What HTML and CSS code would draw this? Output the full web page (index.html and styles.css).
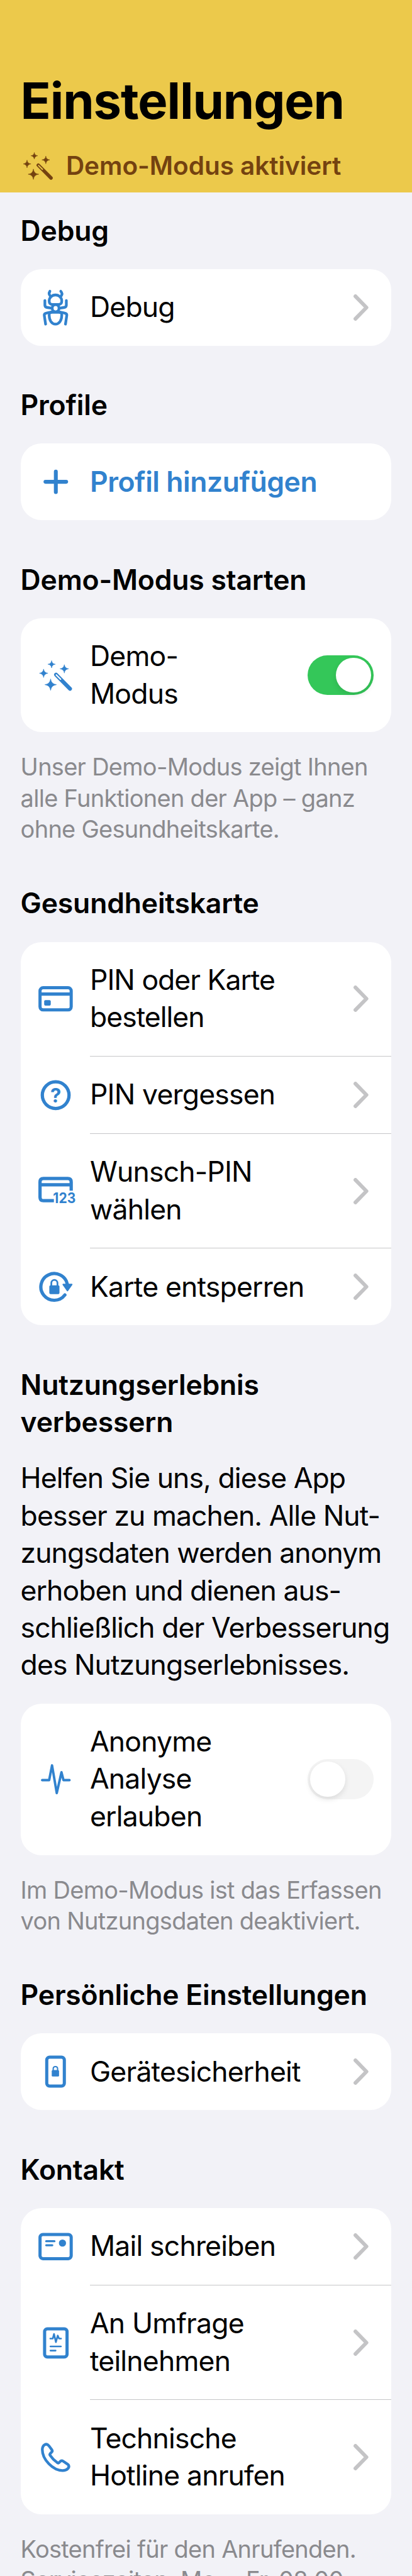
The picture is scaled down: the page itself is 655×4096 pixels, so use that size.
FILE: index.html
```html
<!DOCTYPE html>
<html lang="de">
<head>
<meta charset="utf-8">
<title>Einstellungen</title>
<link rel="stylesheet" href="styles.css">
</head>
<body>
<svg class="defs" width="0" height="0" aria-hidden="true">
  <symbol id="wand" viewBox="0 -9 300 300">
    <g fill="currentColor" stroke="currentColor" stroke-width="3" stroke-linejoin="round">
      <path d="M119 37Q122 60 145 62Q122 65 119 88Q116 65 93 62Q116 60 119 37Z"/>
      <path d="M208 65Q211 91 238 94Q211 97 208 124Q205 97 178 94Q205 91 208 65Z"/>
      <path d="M63 96Q66 122 93 125Q66 129 63 155Q60 129 34 125Q60 122 63 96Z"/>
      <path d="M112 165Q116 201 153 205Q116 209 112 245Q108 209 72 205Q108 201 112 165Z"/>
    </g>
    <path d="M150 135L248 234" fill="none" stroke="currentColor" stroke-width="27" stroke-linecap="round"/>
    <path d="M152 137L182 167" fill="none" class="wand-gap" stroke-width="9" stroke-linecap="round"/>
  </symbol>
  <symbol id="chevron" viewBox="0 0 24 42">
    <path d="M3.1 3.1L20.6 21L3.1 38.9" fill="none" stroke="currentColor" stroke-width="6" stroke-linecap="round" stroke-linejoin="round"/>
  </symbol>
</svg>

<header class="header">
  <h1 class="title">Einstellungen</h1>
  <div class="banner">
    <svg class="banner-icon"><use href="#wand"/></svg>
    <span>Demo-Modus aktiviert</span>
  </div>
</header>

<main class="content">
  <section class="section">
    <h2 class="heading">Debug</h2>
    <div class="card">
      <div class="row">
        <svg class="icon" viewBox="0 3.5 300 300" fill="none" stroke="currentColor" stroke-width="19" stroke-linecap="round" stroke-linejoin="round">
          <path d="M107 39Q96 56 108 70M183 39Q198 56 187 70"/>
          <path d="M102 107C102 84 122 65 146 65S190 84 190 107C190 124 184 132 166 132H126C108 132 102 124 102 107Z"/>
          <ellipse cx="147" cy="158" rx="24" ry="25"/>
          <path d="M122 186C108 187 102 190 102 207C102 244 121 269 146 269S190 244 190 207C190 190 184 187 171 186Z"/>
          <path d="M72 104V137Q72 150 85 152L122 158M222 104V137Q222 150 209 152L172 158"/>
          <path d="M77 269L68 209Q66 195 82 192L123 183M216 269L225 209Q227 195 211 192L170 183"/>
        </svg>
        <span class="label">Debug</span>
        <svg class="chevron"><use href="#chevron"/></svg>
      </div>
    </div>
  </section>

  <section class="section">
    <h2 class="heading">Profile</h2>
    <div class="card">
      <div class="row">
        <svg class="icon" viewBox="0 0 300 300" fill="none" stroke="currentColor" stroke-width="27" stroke-linecap="round">
          <path d="M76 150H221M148.500 78V222"/>
        </svg>
        <span class="label link">Profil hinzufügen</span>
      </div>
    </div>
  </section>

  <section class="section">
    <h2 class="heading">Demo-Modus starten</h2>
    <div class="card">
      <div class="row">
        <svg class="icon"><use href="#wand"/></svg>
        <span class="label">Demo-<br>Modus</span>
        <span class="toggle on"><span class="knob"></span></span>
      </div>
    </div>
    <p class="footnote">Unser Demo-Modus zeigt Ihnen<br>alle Funktionen der App – ganz<br>ohne Gesundheitskarte.</p>
  </section>

  <section class="section after-note">
    <h2 class="heading">Gesundheitskarte</h2>
    <div class="card">
      <div class="row">
        <svg class="icon" viewBox="0 0 300 300">
          <rect x="38" y="73" width="218" height="155" rx="22" fill="none" stroke="currentColor" stroke-width="22"/>
          <path d="M38 117H256" stroke="currentColor" stroke-width="23"/>
          <rect x="67" y="159" width="46" height="39" rx="9" fill="currentColor"/>
        </svg>
        <span class="label tight">PIN oder Karte<br>bestellen</span>
        <svg class="chevron"><use href="#chevron"/></svg>
      </div>
      <div class="row">
        <svg class="icon" viewBox="0 0 300 300">
          <circle cx="147.500" cy="151" r="93.500" fill="none" stroke="currentColor" stroke-width="23"/>
          <text x="148" y="202" class="glyph" font-size="136" text-anchor="middle">?</text>
        </svg>
        <span class="label">PIN vergessen</span>
        <svg class="chevron"><use href="#chevron"/></svg>
      </div>
      <div class="row">
        <svg class="icon" viewBox="0 10 300 300">
          <path d="M135 226H62Q38 226 38 202V95Q38 71 62 71H232Q256 71 256 95V156M38 115H256" fill="none" stroke="currentColor" stroke-width="23"/>
          <text x="129" y="244" class="glyph" font-size="99" textLength="158" lengthAdjust="spacingAndGlyphs">123</text>
        </svg>
        <span class="label">Wunsch-PIN<br>wählen</span>
        <svg class="chevron"><use href="#chevron"/></svg>
      </div>
      <div class="row">
        <svg class="icon" viewBox="0 3 300 300">
          <path d="M212 210A93.500 93.500 0 1 1 229 135" fill="none" stroke="currentColor" stroke-width="23" stroke-linecap="round"/>
          <path d="M200 137H260L230 179Z" fill="currentColor" stroke="currentColor" stroke-width="10" stroke-linejoin="round"/>
          <rect x="103" y="143" width="71" height="61" rx="9" fill="currentColor"/>
          <path d="M117 148V128C117 97 160 97 160 128V148" fill="none" stroke="currentColor" stroke-width="12"/>
        </svg>
        <span class="label">Karte entsperren</span>
        <svg class="chevron"><use href="#chevron"/></svg>
      </div>
    </div>
  </section>

  <section class="section">
    <h2 class="heading">Nutzungserlebnis<br>verbessern</h2>
    <p class="intro">Helfen Sie uns, diese App<br>besser zu machen. Alle Nut-<br>zungsdaten werden anonym<br>erhoben und dienen aus-<br>schließlich der Verbesserung<br>des Nutzungserlebnisses.</p>
    <div class="card">
      <div class="row">
        <svg class="icon" viewBox="0 0 300 300" fill="none" stroke="currentColor" stroke-width="17" stroke-linecap="round" stroke-linejoin="round">
          <path d="M53 156H102L122 53L155 247L188 101L202 156H244"/>
        </svg>
        <span class="label">Anonyme<br>Analyse<br>erlauben</span>
        <span class="toggle"><span class="knob"></span></span>
      </div>
    </div>
    <p class="footnote">Im Demo-Modus ist das Erfassen<br>von Nutzungsdaten deaktiviert.</p>
  </section>

  <section class="section after-note">
    <h2 class="heading">Persönliche Einstellungen</h2>
    <div class="card">
      <div class="row">
        <svg class="icon" viewBox="0 0 300 300">
          <rect x="85" y="48" width="123" height="203" rx="20" fill="none" stroke="currentColor" stroke-width="22"/>
          <rect x="120" y="139" width="51" height="45" rx="7" fill="currentColor"/>
          <path d="M130 142V130C130 109 161 109 161 130V142" fill="none" stroke="currentColor" stroke-width="9"/>
        </svg>
        <span class="label">Gerätesicherheit</span>
        <svg class="chevron"><use href="#chevron"/></svg>
      </div>
    </div>
  </section>

  <section class="section">
    <h2 class="heading">Kontakt</h2>
    <div class="card">
      <div class="row">
        <svg class="icon" viewBox="0 0 300 300">
          <rect x="38" y="66" width="218" height="169" rx="20" fill="none" stroke="currentColor" stroke-width="22"/>
          <path d="M81 113H139M81 141H124" stroke="currentColor" stroke-width="14" stroke-linecap="round"/>
          <circle cx="195" cy="126" r="25" fill="currentColor"/>
        </svg>
        <span class="label">Mail schreiben</span>
        <svg class="chevron"><use href="#chevron"/></svg>
      </div>
      <div class="row">
        <svg class="icon" viewBox="0 0 300 300" fill="none" stroke="currentColor" stroke-linecap="round" stroke-linejoin="round">
          <rect x="70" y="53" width="157" height="197" rx="19" stroke-width="22"/>
          <path d="M110 121H127L136 89L149 146L162 100L171 121H185M111 176H184M111 205H147" stroke-width="12"/>
        </svg>
        <span class="label">An Umfrage<br>teilnehmen</span>
        <svg class="chevron"><use href="#chevron"/></svg>
      </div>
      <div class="row">
        <svg class="icon" viewBox="0 1.5 300 300" fill="none" stroke="currentColor" stroke-width="19" stroke-linecap="round" stroke-linejoin="round">
          <path d="M94 66C82 55 55 62 54 98C54 168 128 244 196 245C230 245 246 222 237 206Q235 203 230 200L200 180Q190 173 181 180L171 190Q165 195 159 190Q130 170 109 139Q104 133 109 127L119 116Q127 109 121 100L101 73Q98 69 94 66Z"/>
        </svg>
        <span class="label">Technische<br>Hotline anrufen</span>
        <svg class="chevron"><use href="#chevron"/></svg>
      </div>
    </div>
    <p class="footnote">Kostenfrei für den Anrufenden.<br>Servicezeiten: Mo. – Fr. 08:00</p>
  </section>
</main>
</body>
</html>
```
FILE: styles.css
```css
* {
  box-sizing: border-box;
}

body {
  margin: 0;
  width: 655px;
  height: 4096px;
  overflow: hidden;
  background: #f2f2f7;
  color: #000;
  font-family: Inter, "Liberation Sans", sans-serif;
  font-size: 44.5px;
  line-height: 59.4px;
  white-space: nowrap;
}

h1,
h2,
p {
  margin: 0;
}

.defs {
  position: absolute;
}

.header {
  height: 306px;
  padding: 111.6px 32.6px 0;
  background: #ecc94b;
}

.title {
  font-size: 79.5px;
  line-height: 96px;
  font-weight: 700;
  letter-spacing: -1.1px;
}

.banner {
  display: flex;
  align-items: center;
  gap: 13.6px;
  height: 60px;
  margin: 25.8px 0 0 -3.1px;
  color: #744210;
  font-size: 40.5px;
  font-weight: 600;
  letter-spacing: -0.05px;
}

.banner-icon {
  width: 61.8px;
  height: 61.8px;
  flex: none;
  --gap: #ecc94b;
}

.wand-gap {
  stroke: var(--gap, #fff);
}

.content {
  padding: 31.5px 32.6px 0;
}

.section + .section {
  margin-top: 65.3px;
}

.section + .after-note {
  margin-top: 63.6px;
}

.heading {
  font-size: 44.5px;
  font-weight: 600;
  letter-spacing: -0.2px;
}

.card {
  margin-top: 30.9px;
  border-radius: 33px;
  background: #fff;
}

.row {
  position: relative;
  display: flex;
  align-items: center;
  padding: 31.3px 36.4px 31.3px 22px;
}

/* Hairline that starts at the label column */
.row:not(:last-child) {
  padding-bottom: 32.3px;
}

.row:not(:last-child)::after {
  content: "";
  position: absolute;
  left: 110.7px;
  right: 0;
  bottom: 0;
  height: 1px;
  background: #c6c6c8;
}

.icon {
  width: 68.2px;
  height: 68.2px;
  flex: none;
  margin: -10px 20.2px -10px 0;
  color: #3182ce;
}

.glyph {
  font-family: Inter, sans-serif;
  font-weight: 700;
  fill: currentColor;
}

.label {
  flex: 1;
  letter-spacing: -0.82px;
}

.label.tight {
  letter-spacing: -1px;
}

.label.link {
  color: #3182ce;
  font-weight: 600;
  letter-spacing: -0.46px;
}

.chevron {
  width: 24px;
  height: 42px;
  flex: none;
  color: #c4c4c6;
}

.toggle {
  display: flex;
  flex: none;
  width: 104.4px;
  height: 63.4px;
  margin-right: -7.6px;
  padding: 4px;
  border-radius: 32px;
  background: #f4f4f4;
}

.toggle.on {
  justify-content: flex-end;
  background: #34c759;
}

.knob {
  width: 55.4px;
  height: 55.4px;
  border-radius: 50%;
  background: #fff;
  box-shadow: 0 4px 10px rgba(0, 0, 0, 0.1);
}

.intro {
  margin-top: 29.9px;
  letter-spacing: -0.94px;
}

.footnote {
  margin-top: 31.1px;
  color: #8a8a8e;
  font-size: 38px;
  line-height: 49.4px;
  letter-spacing: -0.73px;
}
```
